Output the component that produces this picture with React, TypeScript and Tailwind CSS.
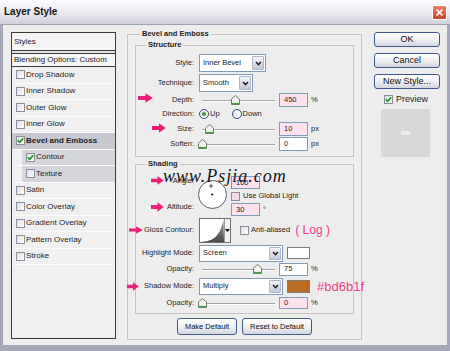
import React from "react";

type Effect = { name: string; checked?: boolean; active?: boolean; sub?: boolean };

const effects: Effect[] = [
  { name: "Drop Shadow" },
  { name: "Inner Shadow" },
  { name: "Outer Glow" },
  { name: "Inner Glow" },
  { name: "Bevel and Emboss", checked: true, active: true },
  { name: "Contour", checked: true, sub: true },
  { name: "Texture", sub: true },
  { name: "Satin" },
  { name: "Color Overlay" },
  { name: "Gradient Overlay" },
  { name: "Pattern Overlay" },
  { name: "Stroke" },
];

// pink annotation arrows drawn over the dialog
const arrows = [
  { l: 138, t: 93, w: 15, h: 10 },
  { l: 152, t: 123, w: 14, h: 10 },
  { l: 151, t: 176, w: 13, h: 9 },
  { l: 151, t: 202, w: 13, h: 10 },
  { l: 129, t: 226, w: 14, h: 8 },
  { l: 127, t: 282, w: 12, h: 9 },
];

const sans = { fontFamily: '"Liberation Sans", Arial, sans-serif' };

function Check({ checked, pink }: { checked?: boolean; pink?: boolean }) {
  return (
    <span
      className={`flex h-[9px] w-[9px] shrink-0 items-center justify-center border border-[#8c8e9c] ${
        pink ? "bg-[#f5d9e7]" : "bg-gradient-to-br from-[#dedee4] to-white"
      }`}
    >
      {checked && (
        <svg width="7" height="7" viewBox="0 0 7 7">
          <path d="M0.8 3.4 L2.7 5.3 L6.2 1.4" fill="none" stroke="#1f9c24" strokeWidth="1.7" />
        </svg>
      )}
    </span>
  );
}

function Radio({ on }: { on?: boolean }) {
  return (
    <span className="flex h-[10px] w-[10px] items-center justify-center rounded-full border border-[#2f4f7e] bg-gradient-to-br from-[#e6e6ea] to-white">
      {on && <span className="h-[4px] w-[4px] rounded-full bg-[#2ea12e]" />}
    </span>
  );
}

function Slider({ pos }: { pos: number }) {
  return (
    <div className="relative ml-[3px] mr-[3px] h-[10px] w-[73px] shrink-0">
      <div className="absolute left-0 right-0 top-[5px] h-[2px] border-t border-b border-t-[#a3a3a3] border-b-white" />
      <svg className="absolute top-0" style={{ left: pos - 4 }} width="9" height="10" viewBox="0 0 9 10">
        <path d="M0.5 9.5 V4 L4.5 0.5 L8.5 4 V9.5 Z" fill="#f3f4ee" stroke="#6e7d6e" />
        <path d="M1 8.6 H8" stroke="#3aa53a" strokeWidth="1.4" />
      </svg>
    </div>
  );
}

function Num({ v, pink, h = "h-[14px]" }: { v: string; pink?: boolean; h?: string }) {
  return (
    <div
      className={`flex ${h} w-[29px] shrink-0 items-center border border-[#7f9db9] pl-[4px] ${
        pink ? "bg-[#fde2ee]" : "bg-white"
      }`}
    >
      {v}
    </div>
  );
}

function Select({ value, w, h = "h-[18px]" }: { value: string; w: string; h?: string }) {
  return (
    <div className={`flex ${h} ${w} shrink-0 items-stretch border border-[#7f9db9] bg-white`}>
      <span className="flex flex-1 items-center pl-[3px]">{value}</span>
      <span className="m-[1px] flex w-[12px] items-center justify-center rounded-[1px] border border-[#b1b5c8] bg-gradient-to-b from-[#f4f4f8] to-[#c6c9d8]">
        <svg width="7" height="5" viewBox="0 0 7 5">
          <path d="M1 1 L3.5 3.6 L6 1" stroke="#222" strokeWidth="1.5" fill="none" />
        </svg>
      </span>
    </div>
  );
}

function Row({ label, h, children }: { label: string; h: string; children?: React.ReactNode }) {
  return (
    <div className={`flex ${h} items-center whitespace-nowrap`}>
      <span className="w-[58px] shrink-0 text-right">{label}</span>
      <div className="ml-[5px] flex items-center">{children}</div>
    </div>
  );
}

function Btn({ children, w, h = "h-[15px]" }: { children: React.ReactNode; w: string; h?: string }) {
  return (
    <div
      className={`flex ${w} ${h} shrink-0 items-center justify-center rounded-[3px] border border-[#3d5a8a] bg-gradient-to-b from-white via-[#f0f0f4] to-[#d3d5e1] text-[#111]`}
    >
      {children}
    </div>
  );
}

export default function App() {
  return (
    <div
      className="relative flex h-[351px] w-[450px] flex-col overflow-hidden bg-[#a4a8b8] text-[7.5px] leading-none text-[#1e1e1e]"
      style={sans}
    >
      {/* TITLE BAR */}
      <div className="flex h-[25px] shrink-0 items-center justify-between border-b border-[#9fa2b3] bg-gradient-to-b from-[#fbfbfd] via-[#ebebf1] to-[#cfd0dc] pl-[4px] pr-[3px]">
        <span className="text-[10px] font-bold text-[#151515]">Layer Style</span>
        <span className="flex h-[15px] w-[15px] items-center justify-center rounded-[2px] border border-white bg-gradient-to-b from-[#e9826e] to-[#c9412a]">
          <svg width="9" height="9" viewBox="0 0 9 9">
            <path d="M1.5 1.5 L7.5 7.5 M7.5 1.5 L1.5 7.5" stroke="white" strokeWidth="1.6" />
          </svg>
        </span>
      </div>

      {/* BODY */}
      <div className="mx-[3px] mb-[6px] flex flex-1 bg-[#ededed]">
        {/* LEFT STYLES LIST */}
        <div className="ml-[8px] mt-[7px] flex h-[307px] w-[105px] shrink-0 flex-col whitespace-nowrap border border-[#3a3a3a] bg-[#f0f0f0] text-[8px]">
          <div className="flex h-[18px] items-center border-b border-[#3a3a3a] bg-[#f5f5f5] pl-[2px]">Styles</div>
          <div className="h-[2px] bg-[#e2e2e2]" />
          <div className="flex h-[14px] items-center border-y border-[#3a3a3a] bg-[#f5f5f5] pl-[2px]">Blending Options: Custom</div>
          {effects.map((e) => (
            <div
              key={e.name}
              className={`flex h-[16.5px] items-stretch border-b border-[#fbfbfb] ${e.active ? "bg-[#c6c7cf] font-bold" : ""}`}
            >
              <div className={`flex flex-1 items-center pl-[4px] ${e.sub ? "ml-[10px] bg-[#d5d6dc]" : ""}`}>
                <Check checked={e.checked} />
                <span className="ml-[1px]">{e.name}</span>
              </div>
            </div>
          ))}
        </div>

        {/* BEVEL AND EMBOSS */}
        <fieldset className="ml-[11px] mt-[4px] h-[311px] w-[235px] min-w-0 shrink-0 border border-[#c3c3c3] px-[7px] pb-[3px] pt-[1px]">
          <legend className="ml-[5px] px-[2px] text-[7.5px] font-bold leading-[10px]">Bevel and Emboss</legend>

          <fieldset className="min-w-0 border border-[#c3c3c3] pb-[5px] pt-[4px]">
            <legend className="ml-[10px] px-[2px] font-bold leading-[10px]">Structure</legend>
            <div className="mb-[2px]">
              <Row label="Style:" h="h-[18px]">
                <Select value="Inner Bevel" w="w-[67px]" />
              </Row>
            </div>
            <Row label="Technique:" h="h-[18px]">
              <Select value="Smooth" w="w-[54px]" />
            </Row>
            <Row label="Depth:" h="h-[15px]">
              <Slider pos={33} />
              <span className="ml-[1px]" />
              <Num v="450" pink />
              <span className="ml-[3px]">%</span>
            </Row>
            <Row label="Direction:" h="h-[14px]">
              <Radio on />
              <span className="ml-[1px]">Up</span>
              <span className="ml-[12px]" />
              <Radio />
              <span className="ml-[1px]">Down</span>
            </Row>
            <Row label="Size:" h="h-[15px]">
              <Slider pos={7} />
              <span className="ml-[1px]" />
              <Num v="10" pink />
              <span className="ml-[3px]">px</span>
            </Row>
            <Row label="Soften:" h="h-[15px]">
              <Slider pos={0} />
              <span className="ml-[1px]" />
              <Num v="0" />
              <span className="ml-[3px]">px</span>
            </Row>
          </fieldset>

          <fieldset className="mt-[2px] min-w-0 border border-[#c3c3c3] pb-[4px] pt-[1px]">
            <legend className="ml-[10px] px-[2px] font-bold leading-[10px]">Shading</legend>
            <div className="flex h-[46px] whitespace-nowrap">
              <div className="flex w-[58px] shrink-0 flex-col items-end">
                <span className="mt-[6px] leading-[10px]">Angle:</span>
                <span className="mt-[16px] leading-[10px]">Altitude:</span>
              </div>
              <svg className="ml-[4px] mt-[10px] shrink-0" width="30" height="30" viewBox="0 0 30 30">
                <circle cx="14.5" cy="14.5" r="14" fill="white" stroke="#5e5e5e" />
                <path d="M13 4 V8 M11 6 H15" stroke="#333" strokeWidth="0.8" />
                <circle cx="14.2" cy="14.5" r="1.1" fill="#111" />
              </svg>
              <div className="ml-[3px] flex flex-col pt-[6px]">
                <div className="flex items-center">
                  <Num v="100" pink h="h-[13px]" />
                  <span className="ml-[3px]">°</span>
                </div>
                <div className="mt-[2px] flex h-[10px] items-center">
                  <Check pink />
                  <span className="ml-[3px]">Use Global Light</span>
                </div>
                <div className="mt-[2px] flex items-center">
                  <Num v="30" pink h="h-[13px]" />
                  <span className="ml-[3px]">°</span>
                </div>
              </div>
            </div>

            <Row label="Gloss Contour:" h="h-[28px]">
              <div className="flex h-[25px] w-[32px] shrink-0 border border-[#6f6f6f] bg-white">
                <svg width="24" height="23" viewBox="0 0 24 23">
                  <defs>
                    <linearGradient id="cg" x1="0" y1="0" x2="0" y2="1">
                      <stop offset="0" stopColor="#9a9a9a" />
                      <stop offset="1" stopColor="#4a4a4a" />
                    </linearGradient>
                  </defs>
                  <path d="M0 23 C 14 22.5, 20 17, 23.5 0.5 L24 23 Z" fill="url(#cg)" />
                </svg>
                <span className="flex flex-1 items-center justify-center border-l border-[#9a9a9a] bg-[#f2f2f2]">
                  <svg width="5" height="3" viewBox="0 0 5 3">
                    <path d="M0 0 H5 L2.5 3 Z" fill="#111" />
                  </svg>
                </span>
              </div>
              <span className="ml-[9px]" />
              <Check />
              <span className="ml-[2px]">Anti-aliased</span>
              <span className="ml-[5px] text-[12px] text-[#ee3d8c]">( Log )</span>
            </Row>

            <Row label="Highlight Mode:" h="h-[18px]">
              <Select value="Screen" w="w-[84px]" h="h-[17px]" />
              <span className="ml-[4px] h-[12px] w-[23px] shrink-0 border border-[#7b7b7b] bg-white" />
            </Row>
            <Row label="Opacity:" h="h-[14px]">
              <Slider pos={55} />
              <span className="ml-[1px]" />
              <Num v="75" h="h-[13px]" />
              <span className="ml-[3px]">%</span>
            </Row>
            <Row label="Shadow Mode:" h="h-[20px]">
              <Select value="Multiply" w="w-[84px]" h="h-[17px]" />
              <span className="ml-[4px] h-[13px] w-[23px] shrink-0 border border-[#7b7b7b] bg-[#bd6b1f]" />
              <span className="ml-[7px] text-[13px] text-[#ee3d8c]">#bd6b1f</span>
            </Row>
            <Row label="Opacity:" h="h-[13px]">
              <Slider pos={0} />
              <span className="ml-[1px]" />
              <Num v="0" pink h="h-[12px]" />
              <span className="ml-[3px]">%</span>
            </Row>
          </fieldset>

          <div className="mt-[4px] flex justify-center gap-[5px] whitespace-nowrap">
            <Btn w="w-[60px]" h="h-[17px]">Make Default</Btn>
            <Btn w="w-[70px]" h="h-[17px]">Reset to Default</Btn>
          </div>
        </fieldset>

        {/* RIGHT BUTTONS */}
        <div className="ml-[12px] mt-[7px] flex w-[66px] shrink-0 flex-col whitespace-nowrap text-[9px]">
          <Btn w="w-[66px]">OK</Btn>
          <div className="mt-[6px]">
            <Btn w="w-[66px]">Cancel</Btn>
          </div>
          <div className="mt-[6px]">
            <Btn w="w-[66px]">New Style...</Btn>
          </div>
          <div className="ml-[10px] mt-[6px] flex items-center">
            <Check checked />
            <span className="ml-[3px]">Preview</span>
          </div>
          <div className="ml-[7px] mt-[5px] flex h-[48px] w-[49px] items-center justify-center bg-[#d8d8d8]">
            <span className="h-[4px] w-[9px] rounded-[1px] bg-[#ececec] blur-[0.5px]" />
          </div>
        </div>
      </div>

      {/* WATERMARK */}
      <span
        className="absolute left-[163px] top-[167px] whitespace-nowrap text-[18px] italic tracking-[1px] text-[#15151f]"
        style={{ fontFamily: '"Liberation Serif", "Times New Roman", serif' }}
      >
        www.Psjia.com
      </span>

      {arrows.map((a, i) => (
        <svg
          key={i}
          className="absolute"
          style={{ left: a.l, top: a.t }}
          width={a.w}
          height={a.h}
          viewBox="0 0 14 10"
          preserveAspectRatio="none"
        >
          <path d="M0 3 H7 V0.3 L13.8 5 L7 9.7 V7 H0 Z" fill="#ec1f78" />
        </svg>
      ))}
    </div>
  );
}
